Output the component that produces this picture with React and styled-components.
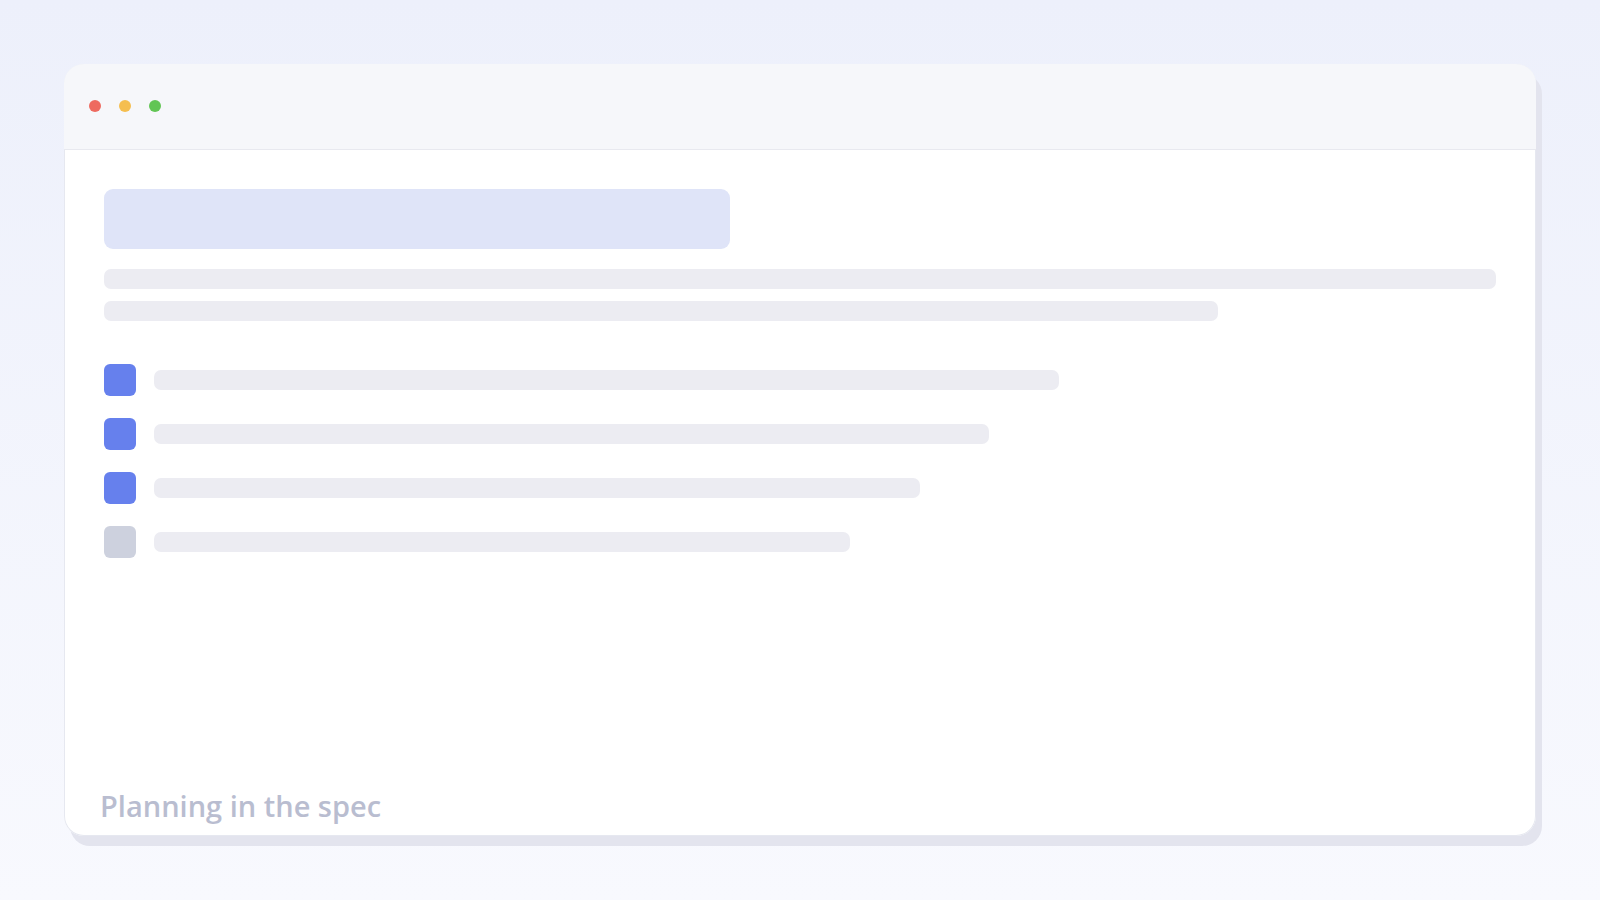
import React from "react";
import styled, { createGlobalStyle } from "styled-components";

const GlobalStyle = createGlobalStyle`
  html, body {
    margin: 0;
    padding: 0;
  }
  body {
    font-family: "Open Sans", "Noto Sans", sans-serif;
  }
`;

const Page = styled.div`
  width: 1600px;
  height: 900px;
  box-sizing: border-box;
  padding: 64px;
  background: linear-gradient(180deg, #edf0fb 0%, #f8f9fe 100%);
  display: flex;
`;

const Window = styled.div`
  flex: 1;
  display: flex;
  flex-direction: column;
  background: #ffffff;
  border-radius: 20px;
  overflow: hidden;
  box-shadow: inset 0 0 0 1px #e6e8f0, 6px 10px 0 #e3e4ee;
`;

const TitleBar = styled.div`
  height: 84px;
  flex-shrink: 0;
  display: flex;
  align-items: center;
  gap: 18px;
  padding: 0 0 1px 25px;
  background: #f6f7fa;
  border-bottom: 1px solid #e8e9ef;
`;

const Dot = styled.span`
  width: 12px;
  height: 12px;
  border-radius: 50%;
  background: ${({ color }) => color};
`;

const Body = styled.div`
  flex: 1;
  display: flex;
  flex-direction: column;
  padding: 39px 40px 0 40px;
`;

const Heading = styled.div`
  width: 45%;
  height: 60px;
  border-radius: 9px;
  background: #dfe4f8;
`;

const Line = styled.div`
  width: ${({ width }) => width};
  height: 20px;
  border-radius: 7px;
  background: #ececf2;
  margin-top: ${({ top }) => top}px;
`;

const List = styled.div`
  margin-top: 43px;
  display: flex;
  flex-direction: column;
  gap: 22px;
`;

const Row = styled.div`
  display: flex;
  align-items: center;
  gap: 18px;
`;

const Check = styled.div`
  width: 32px;
  height: 32px;
  flex-shrink: 0;
  border-radius: 6px;
  background: ${({ done }) => (done ? "#6680ed" : "#cdd1de")};
`;

const Caption = styled.div`
  margin-top: auto;
  padding: 0 0 10px 36px;
  font-size: 29px;
  font-weight: 600;
  line-height: 40px;
  color: #b9bdd0;
`;

const tasks = [
  { width: "65%", done: true },
  { width: "60%", done: true },
  { width: "55%", done: true },
  { width: "50%", done: false },
];

export default function App() {
  return (
    <>
      <GlobalStyle />
      <Page>
        <Window>
          <TitleBar>
            <Dot color="#ee6a5f" />
            <Dot color="#f5be4f" />
            <Dot color="#62c554" />
          </TitleBar>
          <Body>
            <Heading />
            <Line width="100%" top={20} />
            <Line width="80%" top={12} />
            <List>
              {tasks.map((t, i) => (
                <Row key={i}>
                  <Check done={t.done} />
                  <Line width={t.width} top={0} />
                </Row>
              ))}
            </List>
          </Body>
          <Caption>Planning in the spec</Caption>
        </Window>
      </Page>
    </>
  );
}
